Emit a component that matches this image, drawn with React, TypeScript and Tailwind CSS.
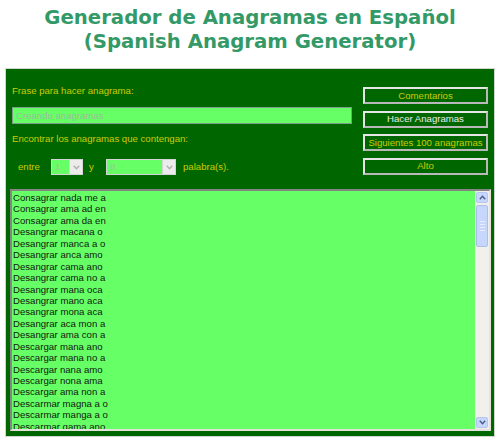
import React from "react";

const rows = [
  "Consagrar nada me a",
  "Consagrar ama ad en",
  "Consagrar ama da en",
  "Desangrar macana o",
  "Desangrar manca a o",
  "Desangrar anca amo",
  "Desangrar cama ano",
  "Desangrar cama no a",
  "Desangrar mana oca",
  "Desangrar mano aca",
  "Desangrar mona aca",
  "Desangrar aca mon a",
  "Desangrar ama con a",
  "Descargar mana ano",
  "Descargar mana no a",
  "Descargar nana amo",
  "Descargar nona ama",
  "Descargar ama non a",
  "Descarmar magna a o",
  "Descarmar manga a o",
  "Descarmar gama ano",
];

function Chevron({ up, color }: { up?: boolean; color: string }) {
  return (
    <svg width="7" height="5" viewBox="0 0 7 5">
      <path
        d={up ? "M0.8 4.2 L3.5 1.3 L6.2 4.2" : "M0.8 0.8 L3.5 3.7 L6.2 0.8"}
        fill="none"
        stroke={color}
        strokeWidth="1.4"
      />
    </svg>
  );
}

function Select({ value, width }: { value: string; width: string }) {
  return (
    <div
      className={`${width} h-[16px] flex border border-[#d4d4d4] bg-[#66ff66]`}
    >
      <div className="flex-1 pl-[3px] text-[9.6px] leading-[14px] text-[#9fc49f]">
        {value}
      </div>
      <div className="w-[13px] h-full bg-[#ececec] border-l border-[#d4d4d4] flex items-center justify-center">
        <Chevron color="#b0b0b0" />
      </div>
    </div>
  );
}

function Btn({ label, color }: { label: string; color: string }) {
  return (
    <div
      className="h-[17px] border-2 border-t-[#e6e6e6] border-l-[#e6e6e6] border-r-[#b8b8b8] border-b-[#b8b8b8] bg-[#006600] flex items-center justify-center text-[9.6px] leading-[12px]"
      style={{ color }}
    >
      {label}
    </div>
  );
}

export default function App() {
  return (
    <div
      className="w-[500px] h-[441px] bg-white overflow-hidden"
      style={{ fontFamily: '"Liberation Sans", Arial, sans-serif' }}
    >
      <div
        className="h-[68px] pt-[6px] text-center text-[19.7px] leading-[24px] font-bold text-[#339966]"
        style={{ fontFamily: '"DejaVu Sans", Verdana, sans-serif' }}
      >
        <div>Generador de Anagramas en Español</div>
        <div>(Spanish Anagram Generator)</div>
      </div>
      <div className="ml-[5px] w-[490px] h-[369px] border border-[#cfd8cf] bg-[#006600] flex flex-col">
        <div className="flex pl-[6px] pr-[6px]">
          <div className="w-[340px] flex flex-col">
            <div className="mt-[16px] h-[12px] text-[9.6px] leading-[12px] text-[#cccc00]">
              Frase para hacer anagrama:
            </div>
            <div className="mt-[10px] h-[17px] border border-[#7c9c8c] bg-[#66ff66] pl-[3px] text-[9.6px] leading-[15px] text-[#9cbc9c]">
              Creando anagramas
            </div>
            <div className="mt-[9px] h-[12px] text-[9.6px] leading-[12px] text-[#cccc00]">
              Encontrar los anagramas que contengan:
            </div>
            <div className="mt-[14px] h-[16px] flex items-center text-[9.6px] text-[#cccc00]">
              <span className="ml-[6px] w-[33px]">entre</span>
              <Select value="1" width="w-[32px]" />
              <span className="ml-[6px] w-[17px]">y</span>
              <Select value="8" width="w-[70px]" />
              <span className="ml-[7px]">palabra(s).</span>
            </div>
          </div>
          <div className="ml-auto w-[125px] mt-[18px] flex flex-col gap-[6.5px]">
            <Btn label="Comentarios" color="#cccc00" />
            <Btn label="Hacer Anagramas" color="#ececec" />
            <Btn label="Siguientes 100 anagramas" color="#cccc00" />
            <Btn label="Alto" color="#cccc00" />
          </div>
        </div>
        <div className="mt-[14px] ml-[4px] mr-[3px] h-[242px] border-2 border-t-[#858585] border-l-[#858585] border-r-[#e4e2da] border-b-[#e4e2da] bg-[#66ff66] flex overflow-hidden">
          <div className="flex-1 pl-[1px] pt-[1px] text-[9.6px] leading-[11.43px] text-[#102010] overflow-hidden">
            {rows.map((r, i) => (
              <div key={i} className="whitespace-nowrap">
                {r}
              </div>
            ))}
          </div>
          <div className="w-[14px] h-full bg-[#f2f0ea] flex flex-col items-center py-[1px]">
            <div className="w-[12px] h-[11px] rounded-[2px] bg-[#c6d6fc] border border-[#b4c6f2] flex items-center justify-center">
              <Chevron up color="#4a5e8c" />
            </div>
            <div className="mt-[2px] w-[12px] h-[42px] rounded-[2px] bg-[#c6d6fc] border border-[#aebfec] flex flex-col items-center justify-center gap-[2px]">
              <div className="w-[5px] h-[1px] bg-[#e8eeff]" />
              <div className="w-[5px] h-[1px] bg-[#e8eeff]" />
              <div className="w-[5px] h-[1px] bg-[#e8eeff]" />
              <div className="w-[5px] h-[1px] bg-[#e8eeff]" />
            </div>
            <div className="flex-1" />
            <div className="w-[12px] h-[11px] rounded-[2px] bg-[#c6d6fc] border border-[#b4c6f2] flex items-center justify-center">
              <Chevron color="#4a5e8c" />
            </div>
          </div>
        </div>
      </div>
    </div>
  );
}
